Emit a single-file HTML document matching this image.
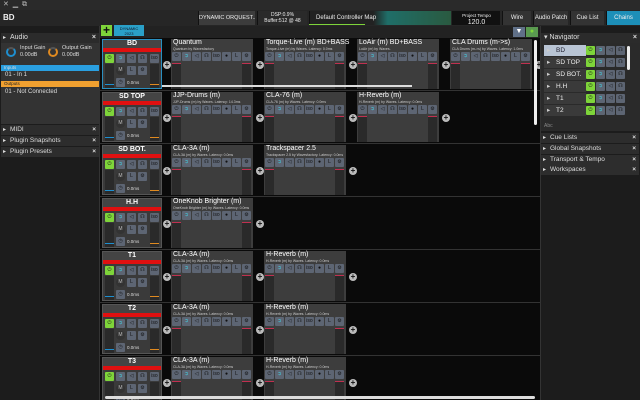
<!DOCTYPE html>
<html><head><style>
*{margin:0;padding:0;box-sizing:border-box}
body{width:640px;height:400px;overflow:hidden;background:#1e1e1e;font-family:"Liberation Sans",sans-serif;color:#ddd;position:relative}
.a{position:absolute}
.tab{position:absolute;top:11px;height:14px;font-size:6px;color:#eee;text-align:center;line-height:14px;background:#2e2e2e;border-left:1px solid #111;white-space:nowrap;overflow:hidden}
.ph{position:absolute;left:1px;width:98px;height:10px;background:#2d2d2d;font-size:6.5px;line-height:10px;padding-left:9px;color:#ddd}
.ph:before{content:"▸";position:absolute;left:2px;font-size:6px}
.ph i{position:absolute;right:3px;font-style:normal;font-weight:bold}
.strip{position:absolute;background:#3a3a3a;border:1px solid #555}
.btn{position:absolute;width:9px;height:9px;background:#5d6573;border-radius:1px;font-size:5px;color:#111;text-align:center;line-height:9px}
.pw{background:#7ed43a}
.plug{position:absolute;background:#3d3d3d;width:82px}
.plus{position:absolute;width:8px;height:8px;border-radius:50%;background:#bbb;color:#111;font-size:8px;line-height:8px;text-align:center;font-weight:bold}
.nav{position:absolute;left:544px;width:84px;height:11px;background:#3a3a3a;font-size:6.5px;line-height:11px;padding-left:12px;color:#eee}
.nav:before{content:"▸";position:absolute;left:3px;color:#ccc}
</style></head><body>
<div class="a" style="left:0;top:0;width:640px;height:10px;background:#2a2a2a;font-size:7px;color:#bbb;padding-left:3px;line-height:10px">✕ &nbsp;▁ &nbsp;⧉</div>
<div class="a" style="left:0;top:10px;width:640px;height:16px;background:#262626"></div>
<div class="a" style="left:3px;top:13px;font-size:8px;color:#eee;font-weight:bold">BD</div>
<div class="tab" style="left:198px;width:57px;background:#3c3c3c;font-size:5.5px">DYNAMIC ORQUEST...</div>
<div class="tab" style="left:257px;width:50px;line-height:6px;padding-top:1px;background:#2a2a2a;font-size:5px">DSP:0.9%<br>Buffer:512 @ 48</div>
<div class="tab" style="left:309px;width:142px;background:linear-gradient(90deg,#222 0,#222 45%,#1f6e68 55%,#2a5a40 100%);text-align:left;padding-left:6px">Default Controller Map</div>
<div class="a" style="left:309px;top:24px;width:56px;height:1px;background:#7ed43a"></div>
<div class="tab" style="left:452px;width:48px;background:#111;line-height:7px;font-size:4.5px;padding-top:1px">Project Tempo<br><span style="font-size:7px">120.0</span></div>
<div class="tab" style="left:502px;width:29px;background:#333">Wire</div>
<div class="tab" style="left:533px;width:35px;background:#333">Audio Patch</div>
<div class="tab" style="left:570px;width:34px;background:#333">Cue List</div>
<div class="tab" style="left:606px;width:34px;background:#1d8fb8">Chains</div>
<!-- left panel -->
<div class="a" style="left:0;top:26px;width:100px;height:374px;background:#1c1c1c;border-right:1px solid #333"></div>
<div class="ph" style="top:33px;background:#2b2b2b;font-size:7px">Audio<i>×</i></div>
<div class="a" style="left:1px;top:43px;width:98px;height:81px;background:#333"></div>
<div class="a" style="left:6px;top:47px;width:10px;height:10px;border-radius:50%;border:2px solid #1e8fd0;border-top-color:#555"></div>
<div class="a" style="left:48px;top:47px;width:10px;height:10px;border-radius:50%;border:2px solid #e08a20;border-top-color:#555"></div>
<div class="a" style="left:20px;top:45px;font-size:5.5px;line-height:7px">Input Gain<br>0.00dB</div>
<div class="a" style="left:62px;top:45px;font-size:5.5px;line-height:7px">Output Gain<br>0.00dB</div>
<div class="a" style="left:1px;top:65px;width:98px;height:6px;background:#2a9fe0;font-size:4.5px;line-height:6px;padding-left:3px">Inputs</div>
<div class="a" style="left:5px;top:72px;font-size:6px">01 - In 1</div>
<div class="a" style="left:1px;top:81px;width:98px;height:6px;background:#f0a030;font-size:4.5px;line-height:6px;padding-left:3px;color:#222">Outputs</div>
<div class="a" style="left:5px;top:89px;font-size:6px">01 - Not Connected</div>
<div class="ph" style="top:125px">MIDI<i>×</i></div>
<div class="ph" style="top:136px">Plugin Snapshots<i>×</i></div>
<div class="ph" style="top:147px">Plugin Presets<i>×</i></div>
<!-- toolbar -->
<div class="a" style="left:100px;top:26px;width:440px;height:12px;background:#222"></div>
<div class="a" style="left:101px;top:25px;width:11px;height:11px;background:#7ed43a;color:#111;font-size:12px;line-height:10px;text-align:center;font-weight:bold">+</div>
<div class="a" style="left:114px;top:25px;width:30px;height:11px;background:#2aa0c8;font-size:4px;line-height:5px;text-align:center;color:#112;padding-top:1px">DYNAMIC<br>2023</div>
<div class="a" style="left:513px;top:27px;width:12px;height:10px;background:#607088;color:#fff;font-size:7px;text-align:center;line-height:10px">▼</div>
<div class="a" style="left:526px;top:27px;width:12px;height:10px;background:#5a9a50;color:#7ed43a;font-size:7px;text-align:center;line-height:10px">●</div>
<div id="main" class="a" style="left:100px;top:38px;width:440px;height:362px;background:#0a0a0a;overflow:hidden"></div>
<div class="a" style="left:105px;top:396px;width:430px;height:3px;background:#ddd;border-radius:2px"></div>
<div class="a" style="left:534px;top:40px;width:3px;height:85px;background:#eee;border-radius:2px"></div>
<!-- right panel -->
<div class="a" style="left:540px;top:26px;width:100px;height:374px;background:#1c1c1c;border-left:1px solid #333"></div>
<div class="a" style="left:541px;top:33px;width:99px;height:10px;background:#2b2b2b;font-size:7px;line-height:10px;padding-left:3px">▾ Navigator<b style="position:absolute;right:3px">×</b></div>
<div class="a" style="left:541px;top:43px;width:99px;height:78px;background:#2a2a2a"></div>
<div id="nav"></div>
<div class="a" style="left:627px;top:46px;width:3px;height:24px;background:#eee;border-radius:2px"></div>
<div class="a" style="left:541px;top:121px;width:99px;height:10px;background:#2a2a2a;font-size:5px;color:#888;padding:2px 0 0 3px">Abc</div>
<div class="ph" style="left:541px;top:133px">Cue Lists<i>×</i></div>
<div class="ph" style="left:541px;top:144px">Global Snapshots<i>×</i></div>
<div class="ph" style="left:541px;top:155px">Transport &amp; Tempo<i>×</i></div>
<div class="ph" style="left:541px;top:165px">Workspaces<i>×</i></div>
<script>
var rows=[["BD",[["Quantum","Quantum by Wavesfactory"],["Torque-Live (m) BD+BASS","Torque-Live (m) by Waves. Latency: 0.0ms"],["LoAir (m) BD+BASS","LoAir (m) by Waves."],["CLA Drums (m->s)","CLA Drums (m->s) by Waves. Latency: 1.0ms"]]],
["SD TOP",[["JJP-Drums (m)","JJP-Drums (m) by Waves. Latency: 14.3ms"],["CLA-76 (m)","CLA-76 (m) by Waves. Latency: 0.0ms"],["H-Reverb (m)","H-Reverb (m) by Waves. Latency: 0.0ms"]]],
["SD BOT.",[["CLA-3A (m)","CLA-3A (m) by Waves. Latency: 0.0ms"],["Trackspacer 2.5","Trackspacer 2.5 by Wavesfactory. Latency: 0.0ms"]]],
["H.H",[["OneKnob Brighter (m)","OneKnob Brighter (m) by Waves. Latency: 0.0ms"]]],
["T1",[["CLA-3A (m)","CLA-3A (m) by Waves. Latency: 0.0ms"],["H-Reverb (m)","H-Reverb (m) by Waves. Latency: 0.0ms"]]],
["T2",[["CLA-3A (m)","CLA-3A (m) by Waves. Latency: 0.0ms"],["H-Reverb (m)","H-Reverb (m) by Waves. Latency: 0.0ms"]]],
["T3",[["CLA-3A (m)","CLA-3A (m) by Waves. Latency: 0.0ms"],["H-Reverb (m)","H-Reverb (m) by Waves. Latency: 0.0ms"]]]];
var h="",ic=["⏻","➲","◁","☊","iso","●","L","⚙"];
rows.forEach(function(r,i){var y=1+i*53;
h+='<div class="a" style="left:0;top:'+(y+51)+'px;width:440px;height:1px;background:#333"></div>';
h+='<div class="strip" style="left:2px;top:'+y+'px;width:60px;height:50px;'+(i==0?'border-color:#2a8fc0':'')+'"><div class="a" style="left:0;top:0;width:58px;height:8px;background:#444;font-size:7px;font-weight:bold;text-align:center;line-height:8px;color:#fff">'+r[0]+'</div><div class="a" style="left:0;top:8px;width:58px;height:4px;background:#e01010"></div>'+
'<div class="btn pw" style="left:2px;top:14px">⏻</div><div class="btn" style="left:13px;top:14px;color:#4cd">➲</div><div class="btn" style="left:24px;top:14px">◁</div><div class="btn" style="left:35px;top:14px">☊</div><div class="btn" style="left:47px;top:14px">iso</div>'+
'<div class="btn" style="left:13px;top:26px;border-radius:50%;background:#333;color:#bbb">M</div><div class="btn" style="left:24px;top:26px">L</div><div class="btn" style="left:35px;top:26px">⚙</div><div class="btn" style="left:13px;top:38px">◷</div><div class="a" style="left:24px;top:40px;font-size:4.5px">0.0ms</div>'+
'<div class="a" style="left:2px;top:24px;width:9px;height:24px;background:#2a2a2a"></div><div class="a" style="left:47px;top:24px;width:9px;height:24px;background:#2a2a2a"></div><div class="a" style="left:2px;top:44px;width:9px;height:1px;background:#1e8fd0"></div><div class="a" style="left:47px;top:44px;width:9px;height:1px;background:#e08a20"></div></div>';
r[1].forEach(function(p,j){var x=71+j*93;
h+='<div class="plus" style="left:'+(x-8)+'px;top:'+(y+22)+'px">+</div>';
h+='<div class="plug" style="left:'+x+'px;top:'+y+'px;height:50px"><div class="a" style="left:2px;top:0;font-size:7px;color:#fff;white-space:nowrap">'+p[0]+'</div><div class="a" style="left:2px;top:8px;font-size:3.5px;color:#ccc;white-space:nowrap">'+p[1]+'</div>';
for(var k=0;k<8;k++)h+='<div class="btn" style="left:'+(1+k*10)+'px;top:13px;'+(k==1?'color:#4cd':'')+'">'+ic[k]+'</div>';
h+='<div class="a" style="left:1px;top:24px;width:9px;height:26px;background:#2a2a2a;border-top:1px solid #c03050"></div><div class="a" style="left:71px;top:24px;width:9px;height:26px;background:#2a2a2a;border-top:1px solid #c03050"></div></div>';});
var n=r[1].length;h+='<div class="plus" style="left:'+(71+n*93-8)+'px;top:'+(y+22)+'px">+</div>';
});
h+='<div class="a" style="left:62px;top:47px;width:250px;height:2px;background:#ddd"></div>';
document.getElementById('main').innerHTML=h;
var nv=["BD","SD TOP","SD BOT.","H.H","T1","T2"],g="";
nv.forEach(function(n,i){var y=45+i*12;g+='<div class="nav" style="top:'+y+'px;width:42px;'+(i==0?'background:#b8c4d4;color:#223':'')+'">'+n+'</div><div class="btn pw" style="left:586px;top:'+(y+1)+'px">⏻</div><div class="btn" style="left:596px;top:'+(y+1)+'px;color:#4cd">➲</div><div class="btn" style="left:606px;top:'+(y+1)+'px">◁</div><div class="btn" style="left:616px;top:'+(y+1)+'px">☊</div>';});
document.getElementById('nav').innerHTML=g;
</script>
</body></html>
